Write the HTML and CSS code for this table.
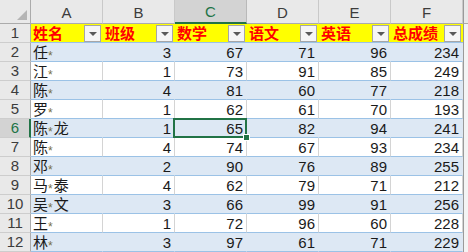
FILE: index.html
```html
<!DOCTYPE html>
<html lang="zh">
<head>
<meta charset="utf-8">
<link rel="stylesheet" href="styles.css">
</head>
<body>
<div class="sheet">
  <div class="row">
    <div class="corner"><div class="tri"></div></div>
    <div class="ch">A</div><div class="ch">B</div><div class="ch sel">C</div><div class="ch">D</div><div class="ch">E</div><div class="ch">F</div><div class="edge-h"></div>
  </div>
  <div class="row hdr">
    <div class="rh">1</div>
    <div class="th"><span>姓名</span><span class="dd"><i></i></span></div>
    <div class="th"><span>班级</span><span class="dd"><i></i></span></div>
    <div class="th"><span>数学</span><span class="dd"><i></i></span></div>
    <div class="th"><span>语文</span><span class="dd"><i></i></span></div>
    <div class="th"><span>英语</span><span class="dd"><i></i></span></div>
    <div class="th"><span>总成绩</span><span class="dd"><i></i></span></div>
    <div class="edge"></div>
  </div>
  <div class="row band">
    <div class="rh">2</div><div class="c t">任<span class="m">*</span></div><div class="c">3</div><div class="c">67</div><div class="c">71</div><div class="c">96</div><div class="c">234</div><div class="edge"></div>
  </div>
  <div class="row">
    <div class="rh">3</div><div class="c t">江<span class="m">*</span></div><div class="c">1</div><div class="c">73</div><div class="c">91</div><div class="c">85</div><div class="c">249</div><div class="edge"></div>
  </div>
  <div class="row band">
    <div class="rh">4</div><div class="c t">陈<span class="m">*</span></div><div class="c">4</div><div class="c">81</div><div class="c">60</div><div class="c">77</div><div class="c">218</div><div class="edge"></div>
  </div>
  <div class="row">
    <div class="rh">5</div><div class="c t">罗<span class="m">*</span></div><div class="c">1</div><div class="c">62</div><div class="c">61</div><div class="c">70</div><div class="c">193</div><div class="edge"></div>
  </div>
  <div class="row band">
    <div class="rh sel">6</div><div class="c t">陈<span class="m">*</span>龙</div><div class="c">1</div><div class="c active">65</div><div class="c">82</div><div class="c">94</div><div class="c">241</div><div class="edge"></div>
  </div>
  <div class="row">
    <div class="rh">7</div><div class="c t">陈<span class="m">*</span></div><div class="c">4</div><div class="c">74</div><div class="c">67</div><div class="c">93</div><div class="c">234</div><div class="edge"></div>
  </div>
  <div class="row band">
    <div class="rh">8</div><div class="c t">邓<span class="m">*</span></div><div class="c">2</div><div class="c">90</div><div class="c">76</div><div class="c">89</div><div class="c">255</div><div class="edge"></div>
  </div>
  <div class="row">
    <div class="rh">9</div><div class="c t">马<span class="m">*</span>泰</div><div class="c">4</div><div class="c">62</div><div class="c">79</div><div class="c">71</div><div class="c">212</div><div class="edge"></div>
  </div>
  <div class="row band">
    <div class="rh">10</div><div class="c t">吴<span class="m">*</span>文</div><div class="c">3</div><div class="c">66</div><div class="c">99</div><div class="c">91</div><div class="c">256</div><div class="edge"></div>
  </div>
  <div class="row">
    <div class="rh">11</div><div class="c t">王<span class="m">*</span></div><div class="c">1</div><div class="c">72</div><div class="c">96</div><div class="c">60</div><div class="c">228</div><div class="edge"></div>
  </div>
  <div class="row band">
    <div class="rh">12</div><div class="c t">林<span class="m">*</span></div><div class="c">3</div><div class="c">97</div><div class="c">61</div><div class="c">71</div><div class="c">229</div><div class="edge"></div>
  </div>
</div>
</body>
</html>
```
FILE: styles.css
```css
html, body {
  margin: 0;
  padding: 0;
  background: #ffffff;
  overflow: hidden;
}
.sheet {
  display: grid;
  grid-template-columns: 31px repeat(6, 72px) 5px;
  grid-template-rows: 24px repeat(12, 19px);
  width: 468px;
  height: 252px;
  font-family: "Liberation Sans", "Noto Sans CJK SC", sans-serif;
  font-size: 15px;
  color: #1a1a1a;
}
.row { display: contents; }
.sheet .row > div { box-sizing: border-box; }

.corner {
  background: #e9e9e9;
  border-right: 1px solid #ababab;
  border-bottom: 1px solid #ababab;
  display: flex;
  align-items: flex-end;
  justify-content: flex-end;
  padding: 0 3px 3px 0;
}
.tri {
  width: 10px;
  height: 10px;
  background: #b5b5b5;
  clip-path: polygon(100% 0, 100% 100%, 0 100%);
}
.ch {
  background: #e9e9e9;
  border-right: 1px solid #c9c9c9;
  border-bottom: 1px solid #ababab;
  display: flex;
  align-items: center;
  justify-content: center;
  color: #3c3c3c;
  padding-top: 1px;
}
.ch.sel {
  background: #d3d3d3;
  color: #217346;
  border-bottom: 2px solid #217346;
  border-right-color: #b9b9b9;
}
.edge-h {
  background: #e9e9e9;
  border-bottom: 1px solid #ababab;
  border-left: 1px solid #9a9a9a;
}
.edge {
  background: #f4f4f4;
  border-left: 1px solid #9a9a9a;
}
.rh {
  background: #e9e9e9;
  border-right: 1px solid #ababab;
  border-bottom: 1px solid #cdcdcd;
  display: flex;
  align-items: center;
  justify-content: center;
  color: #3c3c3c;
  line-height: 18px;
}
.rh.sel {
  background: #d3d3d3;
  color: #217346;
  border-right: 2px solid #217346;
  padding-left: 1px;
}

.th {
  background: #ffff00;
  border-bottom: 1px solid #9bc2e6;
  display: flex;
  align-items: center;
  justify-content: space-between;
  padding: 0 2px 0 2px;
  color: #ff0000;
  font-weight: bold;
  font-family: "Noto Sans CJK SC", sans-serif;
  font-size: 15px;
  line-height: 18px;
}
.dd {
  width: 17px;
  height: 17px;
  box-sizing: border-box;
  border: 1px solid #a6a6a6;
  background: #f5f5f5;
  display: flex;
  align-items: center;
  justify-content: center;
  margin-top: 1px;
}
.dd i {
  width: 0;
  height: 0;
  border-left: 4px solid transparent;
  border-right: 4px solid transparent;
  border-top: 4px solid #5a5a5a;
  margin-top: 1px;
}

.c {
  background: #ffffff;
  border-right: 1px solid #d4d4d4;
  border-bottom: 1px solid #9bc2e6;
  text-align: right;
  padding: 0 3px 0 2px;
  line-height: 19px;
  white-space: nowrap;
}
.c.t {
  text-align: left;
  font-family: "Noto Sans CJK SC", sans-serif;
  font-size: 15px;
  line-height: 18px;
}
.m {
  font-family: "Liberation Sans", sans-serif;
  font-size: 12px;
  line-height: 12px;
  color: #7a6e45;
  vertical-align: -2px;
  margin: 0 1px 0 0;
}
.band .c {
  background: #dde8f4;
  border-right-color: #dde8f4;
}

.c.active {
  position: relative;
}
.c.active::after {
  content: "";
  position: absolute;
  left: -2px;
  top: -1px;
  right: -1px;
  bottom: -1px;
  border: 2px solid #217346;
  z-index: 2;
}
.c.active::before {
  content: "";
  position: absolute;
  right: -4px;
  bottom: -4px;
  width: 5px;
  height: 5px;
  background: #217346;
  border: 1px solid #ffffff;
  z-index: 3;
}
```
